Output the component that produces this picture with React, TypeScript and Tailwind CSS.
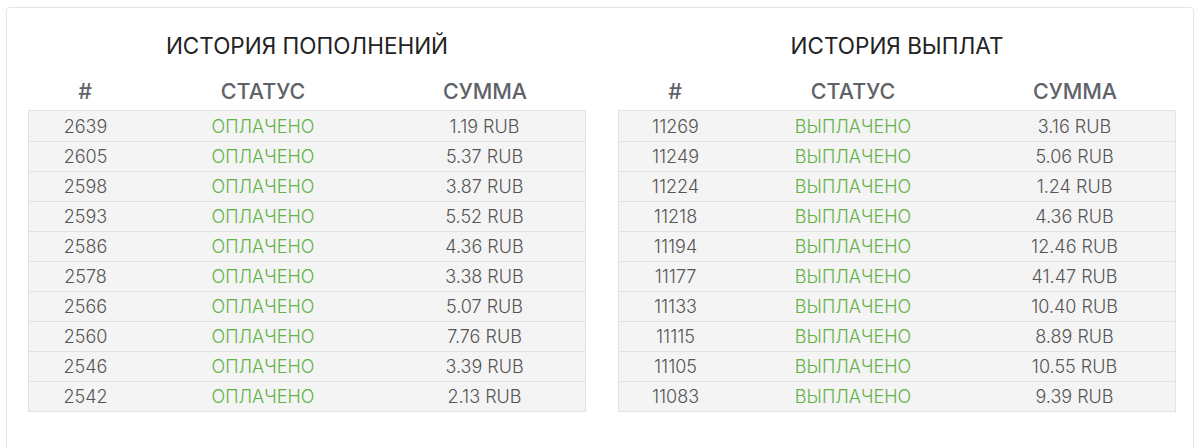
import React from "react";

const dep = [
  ["2639", "1.19 RUB"],
  ["2605", "5.37 RUB"],
  ["2598", "3.87 RUB"],
  ["2593", "5.52 RUB"],
  ["2586", "4.36 RUB"],
  ["2578", "3.38 RUB"],
  ["2566", "5.07 RUB"],
  ["2560", "7.76 RUB"],
  ["2546", "3.39 RUB"],
  ["2542", "2.13 RUB"],
];
const pay = [
  ["11269", "3.16 RUB"],
  ["11249", "5.06 RUB"],
  ["11224", "1.24 RUB"],
  ["11218", "4.36 RUB"],
  ["11194", "12.46 RUB"],
  ["11177", "41.47 RUB"],
  ["11133", "10.40 RUB"],
  ["11115", "8.89 RUB"],
  ["11105", "10.55 RUB"],
  ["11083", "9.39 RUB"],
];

function Table({ title, rows, status }: { title: string; rows: string[][]; status: string }) {
  return (
    <div className="flex-1 flex flex-col">
      <div className="h-[67px] flex items-center justify-center pt-[8px] text-[22.5px] text-[#222]">
        {title}
      </div>
      <div className="grid grid-cols-[114px_242px_1fr] h-[35px] items-center text-[21.5px] font-medium text-[#5f6368] text-center pb-[2px]">
        <div>#</div>
        <div>СТАТУС</div>
        <div>СУММА</div>
      </div>
      <div className="border border-[#e2e2e2] bg-[#f4f4f4]">
        {rows.map((r, i) => (
          <div
            key={i}
            className={
              "grid grid-cols-[113px_242px_1fr] h-[30px] items-center text-center text-[18px] font-light text-[#555] " +
              (i > 0 ? "border-t border-[#e2e2e2]" : "")
            }
          >
            <div>{r[0]}</div>
            <div className="text-[#62b246]">{status}</div>
            <div>{r[1]}</div>
          </div>
        ))}
      </div>
    </div>
  );
}

export default function App() {
  return (
    <div className="w-[1200px] h-[448px] bg-white overflow-hidden" style={{ fontFamily: "Inter, 'Noto Sans', sans-serif" }}>
      <div className="ml-[6px] mt-[7px] w-[1188px] h-[500px] border border-[#e6e6e6] rounded-[4px] shadow-[0_0_3px_rgba(0,0,0,0.06)] flex gap-[32px] pl-[21px] pr-[17px]">
        <Table title="ИСТОРИЯ ПОПОЛНЕНИЙ" rows={dep} status="ОПЛАЧЕНО" />
        <Table title="ИСТОРИЯ ВЫПЛАТ" rows={pay} status="ВЫПЛАЧЕНО" />
      </div>
    </div>
  );
}
